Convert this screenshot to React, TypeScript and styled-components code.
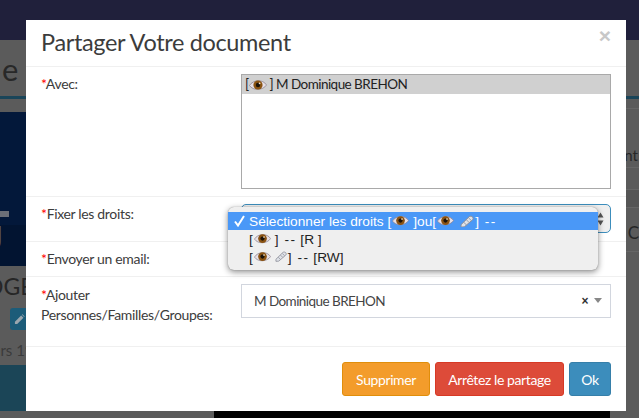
import React from "react";
import styled, { createGlobalStyle } from "styled-components";

const Global = createGlobalStyle`
  html, body { margin: 0; padding: 0; background: #5b5b5b; overflow: hidden; }
  * { box-sizing: border-box; }
  body { font-family: "Lato", "Noto Sans", sans-serif; color: #333; }
`;

const Page = styled.div`
  position: relative;
  width: 639px;
  height: 418px;
  overflow: hidden;
  display: flex;
  flex-direction: column;
  background: #5b5b5b;
`;

const TopBar = styled.div`
  height: 40px;
  flex: none;
  background: #20203b;
`;

const TitleBand = styled.div`
  height: 59px;
  flex: none;
  background: #5b5b5b;
  border-bottom: 3px solid #1a4559;
  padding: 11px 0 0 2px;
  font-size: 31px;
  line-height: 36px;
  color: #282828;
`;

const Split = styled.div`
  flex: 1;
  display: grid;
  grid-template-columns: 1fr 1fr;
  min-height: 0;
`;

const LeftCol = styled.div`
  display: flex;
  flex-direction: column;
`;

const RightCol = styled.div`
  display: flex;
  flex-direction: column;
`;

const GrayStrip = styled.div`
  height: 13px;
  flex: none;
`;

const NavyPanel = styled.div`
  height: 154px;
  flex: none;
  background: #03183a;
  display: flex;
  flex-direction: column;
  justify-content: flex-end;
`;

const NavyDash = styled.div`
  width: 9px;
  height: 6px;
  background: #6b6f78;
  margin-bottom: 8px;
`;

const NavyFoot = styled.div`
  height: 41px;
  background: #021431;
  color: #5d6573;
  font-size: 36px;
  line-height: 27px;
  width: 26px;
  overflow: hidden;
  text-indent: -23px;
  white-space: nowrap;
`;

const LeftClip = styled.div`
  width: 26px;
  overflow: hidden;
  white-space: nowrap;
`;

const Name = styled(LeftClip)`
  height: 42px;
  padding-top: 3px;
  font-size: 23px;
  line-height: 34px;
  text-indent: -15px;
  color: #262626;
`;

const MetaRow = styled.div`
  height: 22px;
  display: flex;
  justify-content: flex-end;
  width: 26px;
`;

const EditButton = styled.div`
  width: 16px;
  height: 22px;
  background: #1c5c79;
  border-radius: 3px 0 0 3px;
  display: flex;
  align-items: center;
  justify-content: flex-end;
  padding-right: 1px;
`;

const Since = styled(LeftClip)`
  height: 35px;
  padding-top: 10px;
  font-size: 15px;
  line-height: 20px;
  text-indent: -7px;
  color: #3a3a3a;
`;

const TealBand = styled.div`
  height: 46px;
  flex: none;
  background: #1b4557;
`;

const RightRow = styled.div<{ $h: number; $dark?: boolean }>`
  height: ${(p) => p.$h}px;
  flex: none;
  border-bottom: 1px solid #666;
  background: ${(p) => (p.$dark ? "#555" : "#5b5b5b")};
  color: #262626;
  font-size: 15px;
  text-align: right;
  padding-right: 1px;
  white-space: nowrap;
`;

const RightNt = styled(RightRow)`
  line-height: 20px;
  padding-top: 36px;
`;

const RightC = styled(RightRow)`
  font-size: 17px;
  padding-top: 14px;
  padding-right: 0;
  text-indent: 6px;
`;

const BottomBlack = styled.div`
  position: absolute;
  left: 214px;
  right: 29px;
  bottom: 0;
  height: 7px;
  background: #000;
`;

const Modal = styled.div`
  position: absolute;
  left: 26px;
  top: 20px;
  width: 600px;
  height: 391px;
  background: #fff;
  display: flex;
  flex-direction: column;
`;

const Header = styled.div`
  height: 47px;
  flex: none;
  border-bottom: 1px solid #f0f0f0;
  padding: 8px 15px 0;
  display: flex;
  justify-content: space-between;
`;

const Title = styled.h4`
  margin: 0;
  font-size: 23.5px;
  line-height: 28px;
  font-weight: 400;
  letter-spacing: -0.35px;
  color: #3c3c3c;
`;

const Close = styled.span`
  font-family: "Liberation Sans", sans-serif;
  font-size: 21px;
  font-weight: 700;
  line-height: 20px;
  color: #c8c8c8;
  margin-top: -2px;
`;

const Row = styled.div<{ $h: number }>`
  height: ${(p) => p.$h}px;
  flex: none;
  border-bottom: 1px solid #f0f0f0;
  padding: 7px 15px 0;
  display: grid;
  grid-template-columns: 200px 370px;
`;

const Label = styled.div<{ $top?: number }>`
  font-size: 14px;
  line-height: 20px;
  letter-spacing: -0.33px;
  color: #3c3c3c;
  margin-top: ${(p) => p.$top ?? 0}px;
`;

const Star = styled.span`
  color: #f00;
`;

const ListBox = styled.div`
  width: 370px;
  height: 115px;
  border: 1px solid #a9a9a9;
`;

const ListItem = styled.div`
  height: 19px;
  background: #d0d0d0;
  padding-left: 3px;
  font-size: 13.5px;
  line-height: 19px;
  letter-spacing: -0.55px;
  color: #222;
  white-space: pre;
  display: flex;
  align-items: center;
`;

const NativeSelect = styled.div`
  width: 370px;
  height: 29px;
  border: 1px solid #3c8dbc;
  border-radius: 5px;
  background: #efefef;
  display: flex;
  justify-content: flex-end;
  align-items: center;
  padding-right: 6px;
`;

const Combo = styled.div`
  width: 370px;
  height: 34px;
  border: 1px solid #d2d6de;
  display: flex;
  align-items: center;
  padding: 0 8px 1px 12px;
  font-size: 13.5px;
  letter-spacing: -0.55px;
  color: #444;
`;

const ComboText = styled.span`
  flex: 1;
`;

const ClearX = styled.span`
  font-family: "Liberation Sans", sans-serif;
  font-weight: 700;
  font-size: 12px;
  color: #333;
  margin-right: 6px;
`;

const Caret = styled.span`
  width: 0;
  height: 0;
  border-left: 4px solid transparent;
  border-right: 4px solid transparent;
  border-top: 5px solid #888;
`;

const Footer = styled.div`
  flex: 1;
  padding: 15px 15px 0;
  display: flex;
  justify-content: flex-end;
  align-items: flex-start;
  gap: 5px;
`;

const Button = styled.button<{ $bg: string; $border: string; $w: number }>`
  width: ${(p) => p.$w}px;
  height: 34px;
  padding: 0;
  border-radius: 3px;
  border: 1px solid ${(p) => p.$border};
  background: ${(p) => p.$bg};
  color: #fff;
  font-family: inherit;
  font-size: 14px;
  letter-spacing: -0.4px;
`;

const Popup = styled.div`
  position: absolute;
  left: 228px;
  top: 207px;
  width: 370px;
  height: 63px;
  padding: 5px 0;
  background: #efefef;
  border-radius: 6px;
  box-shadow: 0 2px 6px rgba(0, 0, 0, 0.45), 0 0 1px rgba(0, 0, 0, 0.4);
  font-family: "Liberation Sans", sans-serif;
  font-size: 13.7px;
  color: #222;
`;

const Option = styled.div<{ $active?: boolean }>`
  height: 18px;
  padding-left: 21px;
  position: relative;
  display: flex;
  align-items: center;
  white-space: pre;
  background: ${(p) => (p.$active ? "#4a98f7" : "transparent")};
  color: ${(p) => (p.$active ? "#fff" : "#222")};
`;

const Dash = styled.span`
  letter-spacing: 1.5px;
  margin-left: 2px;
`;

const Check = styled.svg`
  position: absolute;
  left: 6px;
  top: 3px;
`;

const EyeSvg = styled.svg<{ $before: number; $after: number }>`
  flex: none;
  margin-left: ${(p) => p.$before}px;
  margin-right: ${(p) => p.$after}px;
`;

const PencilSvg = styled.svg<{ $before: number }>`
  flex: none;
  margin-left: ${(p) => p.$before}px;
  margin-right: 1px;
`;

const Eye = ({ w = 17, before = 1, after = 4 }: { w?: number; before?: number; after?: number }) => (
  <EyeSvg $before={before} $after={after} width={w} height={(w * 14) / 18} viewBox="0 0 18 14">
    <path d="M0.5 7.5 C4 1.5 14 1 17.5 7 C14 12.5 4 13 0.5 7.5Z" fill="#e6dfe6" stroke="#8f8490" strokeWidth="0.8" />
    <circle cx="9" cy="7" r="4.6" fill="#8a5312" />
    <circle cx="9" cy="7" r="2.2" fill="#1c1208" />
    <circle cx="10.6" cy="5.3" r="0.9" fill="#f4e9d8" />
  </EyeSvg>
);

const Pencil = ({ w = 13, before = 0 }: { w?: number; before?: number }) => (
  <PencilSvg $before={before} width={w} height={(w * 12) / 13} viewBox="0 0 13 12">
    <path d="M1 9 L8.5 1.6 C9.5 .8 11 1 11.8 2 C12.4 3 12.2 4 11.5 4.6 L4 11 L1 11.2Z" fill="#dfe2e8" stroke="#8d8f99" strokeWidth="0.9" />
    <path d="M3.5 6.8 L6 9.2 M6 4.5 L8.4 6.9 M8 2.8 L10.4 5" stroke="#8d8f99" strokeWidth="0.8" />
  </PencilSvg>
);

const Stepper = () => (
  <svg width="7" height="14" viewBox="0 0 7 14">
    <path d="M3.5 0.5 L6.5 5.5 H0.5Z M3.5 13.5 L6.5 8.5 H0.5Z" fill="#555" />
  </svg>
);

export default function App() {
  return (
    <>
      <Global />
      <Page>
        <TopBar />
        <TitleBand>e</TitleBand>
        <Split>
          <LeftCol>
            <GrayStrip />
            <NavyPanel>
              <NavyDash />
              <NavyFoot>U</NavyFoot>
            </NavyPanel>
            <Name>OGE</Name>
            <MetaRow>
              <EditButton>
                <svg width="11" height="11" viewBox="0 0 12 12">
                  <path d="M1 8.5 L7.8 1.7 L10.3 4.2 L3.5 11 H1Z M8.6 0.9 L9.3 0.4 L11.6 2.7 L11.1 3.4Z" fill="#9aa6ae" />
                </svg>
              </EditButton>
            </MetaRow>
            <Since>ars 19</Since>
            <TealBand />
          </LeftCol>
          <RightCol>
            <RightRow $h={10} />
            <RightNt $h={59}>nt</RightNt>
            <RightRow $h={22} />
            <RightRow $h={18} $dark />
            <RightC $h={44}>C</RightC>
          </RightCol>
        </Split>
        <BottomBlack />
        <Modal>
          <Header>
            <Title>Partager Votre document</Title>
            <Close>×</Close>
          </Header>
          <Row $h={130}>
            <Label>
              <Star>*</Star>Avec:
            </Label>
            <ListBox>
              <ListItem>
                [<Eye w={18} before={0} after={3} />] M Dominique BREHON
              </ListItem>
            </ListBox>
          </Row>
          <Row $h={45}>
            <Label>
              <Star>*</Star>Fixer les droits:
            </Label>
            <NativeSelect>
              <Stepper />
            </NativeSelect>
          </Row>
          <Row $h={35}>
            <Label>
              <Star>*</Star>Envoyer un email:
            </Label>
          </Row>
          <Row $h={70}>
            <Label $top={1}>
              <Star>*</Star>Ajouter Personnes/Familles/Groupes:
            </Label>
            <Combo>
              <ComboText>M Dominique BREHON</ComboText>
              <ClearX>×</ClearX>
              <Caret />
            </Combo>
          </Row>
          <Footer>
            <Button $w={88} $bg="#f39c2b" $border="#e08e0b">Supprimer</Button>
            <Button $w={129} $bg="#dd4b39" $border="#d73925">Arrêtez le partage</Button>
            <Button $w={42} $bg="#3c8dbc" $border="#367fa9">Ok</Button>
          </Footer>
        </Modal>
        <Popup>
          <Option $active>
            <Check width="11" height="12" viewBox="0 0 11 12">
              <path d="M1 6.5 L4 10.5 L10 1" fill="none" stroke="#fff" strokeWidth="2" />
            </Check>
            Sélectionner les droits [<Eye />]ou[<Eye /><Pencil w={14} before={2} />] <Dash>--</Dash>
          </Option>
          <Option>
            [<Eye />] <Dash>--</Dash> [R ]
          </Option>
          <Option>
            [<Eye /><Pencil w={12} />] <Dash>--</Dash> [RW]
          </Option>
        </Popup>
      </Page>
    </>
  );
}
